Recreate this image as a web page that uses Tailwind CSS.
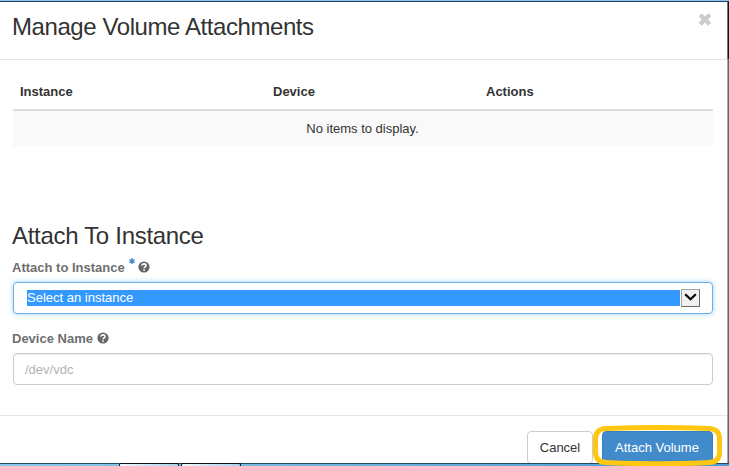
<!DOCTYPE html>
<html lang="en">
<head>
<meta charset="utf-8">
<title>Manage Volume Attachments</title>
<script src="https://cdn.jsdelivr.net/npm/@tailwindcss/browser@4"></script>
</head>
<body class="w-[729px] h-[466px] overflow-hidden bg-white font-['Liberation_Sans',Arial,sans-serif] text-[13px] leading-[18px] text-[#333]">
<div class="relative flex flex-col w-[729px] h-[466px]">
  <div class="h-[2px] shrink-0 bg-[#8fc1e8] border-b border-[#1f4468]"></div>
  <div class="flex h-[461px] shrink-0">
    <main class="flex flex-col w-[727px] bg-white">
      <header class="flex justify-between h-[58px] shrink-0 border-b border-[#e5e5e5] pl-[12px] pr-[15px]">
        <h1 class="pt-[9px] text-[24px] leading-[32px] tracking-[-0.42px] whitespace-nowrap">Manage Volume Attachments</h1>
        <button class="mt-[11px] w-[14px] h-[13px]" aria-label="Close">
          <svg class="block" width="14" height="13" viewBox="0 0 14 13"><path d="M2.200 1.800 11.800 11.200M11.800 1.800 2.200 11.200" stroke="#ccc" stroke-width="4.4" fill="none"/></svg>
        </button>
      </header>
      <section class="h-[355px] shrink-0 pl-[13px] pr-[14px]">
        <div class="flex h-[51px] border-b-2 border-[#ddd] pt-[23px] font-bold">
          <div class="w-[253px] pl-[7px]">Instance</div>
          <div class="w-[213px] pl-[7px]">Device</div>
          <div class="pl-[7px]">Actions</div>
        </div>
        <div class="h-[35px] bg-[#f9f9f9] pt-[9px] pr-[1px] text-center">No items to display.</div>
        <h2 class="-ml-px mt-[74px] text-[24px] leading-[32px] tracking-[-0.3px] whitespace-nowrap">Attach To Instance</h2>
        <label class="flex h-[18px] -ml-px mt-[7px] font-bold text-[#6f6f6f]">Attach to Instance
          <svg class="ml-[4px] -mt-px" width="6" height="7" viewBox="0 0 6 7"><path d="M3 0V6M.4 1.6 5.6 4.4M5.6 1.6.4 4.4" stroke="#428bca" stroke-width="1.3"/></svg>
          <svg class="ml-[3px] mt-[2px]" width="12" height="12" viewBox="0 0 12 12"><circle cx="6" cy="6" r="5.6" fill="#666"/><path d="M3.8 4.6C4 2.4 8 2.3 8 4.5 8 5.8 6.1 5.9 6.1 7.3" fill="none" stroke="#fff" stroke-width="1.6"/><path d="M5.2 8.2h1.7v1.5H5.2z" fill="#fff"/></svg>
        </label>
        <div class="flex items-center mt-[5px] h-[32px] rounded-[4px] border border-[#66afe9] shadow-[0_0_5px_rgba(102,175,233,.6)] pl-[13px] pr-[12px]">
          <div class="h-[16px] w-[653px] bg-[#3399ff] text-white leading-[16px]">Select an instance</div>
          <div class="flex justify-center ml-[1px] w-[19px] h-[18px] bg-[#f0f0f0] border border-t-[#a5a5a5] border-l-[#a5a5a5] border-r-[#696969] border-b-[#696969]">
            <svg class="mt-[3px]" width="13" height="9" viewBox="0 0 13 9"><path d="M1.2 1.2 6.5 6.3 11.8 1.2" fill="none" stroke="#000" stroke-width="2.2"/></svg>
          </div>
        </div>
        <label class="flex h-[18px] -ml-px mt-[16px] font-bold text-[#6f6f6f]">Device Name
          <svg class="ml-[4px] mt-[2px]" width="12" height="12" viewBox="0 0 12 12"><circle cx="6" cy="6" r="5.6" fill="#666"/><path d="M3.8 4.6C4 2.4 8 2.3 8 4.5 8 5.8 6.1 5.9 6.1 7.3" fill="none" stroke="#fff" stroke-width="1.6"/><path d="M5.2 8.2h1.7v1.5H5.2z" fill="#fff"/></svg>
        </label>
        <div class="mt-[5px] h-[32px] rounded-[4px] border border-[#ccc] shadow-[inset_0_1px_1px_rgba(0,0,0,.075)] pl-[11px] pt-[7px] text-[#b3b3b3]">/dev/vdc</div>
      </section>
      <footer class="flex justify-end h-[48px] shrink-0 border-t border-[#e5e5e5] pt-[15px] pr-[14px]">
        <button class="w-[66px] h-[33px] rounded-[4px] border border-[#ccc]">Cancel</button>
        <button class="ml-[9px] w-[111px] h-[32px] rounded-[4px] bg-[#428bca] border border-[#3a80bf] pt-[2px] pr-[1px] text-white whitespace-nowrap">Attach Volume</button>
      </footer>
    </main>
    <div class="w-[2px] shrink-0">
      <div class="h-[57px] bg-[#101418] border-l border-[#777]"></div>
      <div class="h-[404px] bg-[#666] border-l border-[#aaa]"></div>
    </div>
  </div>
  <div class="flex h-[3px] shrink-0 border-t border-[#24485f] bg-linear-to-r from-[#8bcaec] to-[#4b9ad2]">
    <div class="relative -mt-px ml-[119px] w-[60px] h-[3px] rounded-t-[2px] border border-b-0 border-[#111] bg-linear-to-r from-[#f0f6fa] to-[#a5d4ee]"></div>
    <div class="relative -mt-px ml-[2px] w-[60px] h-[3px] rounded-t-[2px] border border-b-0 border-[#111] bg-linear-to-r from-[#f0f6fa] to-[#a5d4ee]"></div>
  </div>
  <svg class="absolute left-[590px] top-[424px]" width="135" height="42" viewBox="0 0 135 42"><path d="M16 4.5C40 3 96 3 119 4.5Q129 5 129.500 14V29Q129 38 119 38.500C96 40 40 40 16 38.500Q6 38 5.500 29V14Q6 5 16 4.500Z" fill="none" stroke="#ffc612" stroke-width="5"/></svg>
</div>
</body>
</html>
